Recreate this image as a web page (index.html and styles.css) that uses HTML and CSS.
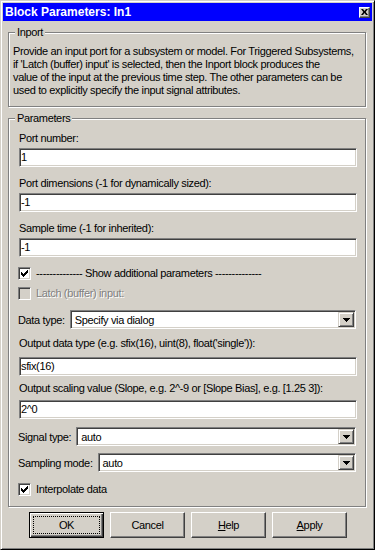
FILE: index.html
```html
<!DOCTYPE html>
<html lang="en">
<head>
    <meta charset="UTF-8">
    <meta name="viewport" content="width=device-width, initial-scale=1.0">
    <title>Block Parameters: In1</title>
    <link rel="stylesheet" href="styles.css">
</head>
<body>

    <div class="window">

        <!-- Title bar -->
        <div class="titlebar">
            <span class="title">Block Parameters: In1</span>
            <div class="close-btn">
                <svg width="7" height="6" viewBox="0 0 7 6"><path d="M0 0h2l1.5 2 1.5-2h2l-2.3 3 2.3 3h-2l-1.5-2-1.5 2h-2l2.3-3z" fill="#000"/></svg>
            </div>
        </div>

        <!-- Inport description -->
        <div class="group group-inport">
            <span class="group-title">Inport</span>
            <p class="desc">Provide an input port for a subsystem or model. For Triggered Subsystems,<br>if 'Latch (buffer) input' is selected, then the Inport block produces the<br>value of the input at the previous time step. The other parameters can be<br>used to explicitly specify the input signal attributes.</p>
        </div>

        <!-- Parameters -->
        <div class="group group-params">
            <span class="group-title">Parameters</span>

            <div class="label">Port number:</div>
            <div class="edit">1</div>

            <div class="label">Port dimensions (-1 for dynamically sized):</div>
            <div class="edit">-1</div>

            <div class="label">Sample time (-1 for inherited):</div>
            <div class="edit">-1</div>

            <div class="check-row">
                <span class="checkbox"><svg width="7" height="7" viewBox="0 0 7 7"><path d="M0 2h1v3H0zM1 3h1v3H1zM2 4h1v3H2zM3 3h1v3H3zM4 2h1v3H4zM5 1h1v3H5zM6 0h1v3H6z" fill="#000"/></svg></span>
                <span>-------------- Show additional parameters --------------</span>
            </div>

            <div class="check-row check-latch">
                <span class="checkbox disabled"></span>
                <span class="disabled-text">Latch (buffer) input:</span>
            </div>

            <div class="combo-row row-datatype">
                <span>Data type:</span>
                <div class="combo">
                    <span class="combo-text">Specify via dialog</span>
                    <span class="combo-btn"><svg width="7" height="4" viewBox="0 0 7 4"><path d="M0 0h7v1H0zM1 1h5v1H1zM2 2h3v1H2zM3 3h1v1H3z" fill="#000"/></svg></span>
                </div>
            </div>

            <div class="label label-tight">Output data type (e.g. sfix(16), uint(8), float('single')):</div>
            <div class="edit edit-tight">sfix(16)</div>

            <div class="label label-tighter">Output scaling value (Slope, e.g. 2^-9 or [Slope Bias], e.g. [1.25 3]):</div>
            <div class="edit edit-tighter">2^0</div>

            <div class="combo-row row-signal">
                <span>Signal type:</span>
                <div class="combo">
                    <span class="combo-text">auto</span>
                    <span class="combo-btn"><svg width="7" height="4" viewBox="0 0 7 4"><path d="M0 0h7v1H0zM1 1h5v1H1zM2 2h3v1H2zM3 3h1v1H3z" fill="#000"/></svg></span>
                </div>
            </div>

            <div class="combo-row row-sampling">
                <span>Sampling mode:</span>
                <div class="combo">
                    <span class="combo-text">auto</span>
                    <span class="combo-btn"><svg width="7" height="4" viewBox="0 0 7 4"><path d="M0 0h7v1H0zM1 1h5v1H1zM2 2h3v1H2zM3 3h1v1H3z" fill="#000"/></svg></span>
                </div>
            </div>

            <div class="check-row check-interp">
                <span class="checkbox"><svg width="7" height="7" viewBox="0 0 7 7"><path d="M0 2h1v3H0zM1 3h1v3H1zM2 4h1v3H2zM3 3h1v3H3zM4 2h1v3H4zM5 1h1v3H5zM6 0h1v3H6z" fill="#000"/></svg></span>
                <span>Interpolate data</span>
            </div>
        </div>

        <!-- Dialog buttons -->
        <div class="buttons">
            <div class="btn btn-default"><span class="focus-rect">OK</span></div>
            <div class="btn">Cancel</div>
            <div class="btn"><span><u>H</u>elp</span></div>
            <div class="btn"><span><u>A</u>pply</span></div>
        </div>

    </div>

</body>
</html>
```

FILE: styles.css
```css
/* General */
body {
    margin: 0;
    font-family: "Liberation Sans", Arial, sans-serif;
    font-size: 11px;
    letter-spacing: -0.35px;
    color: #000;
    background-color: #d4d0c8;
}

/* Window frame */
.window {
    width: 375px;
    height: 550px;
    box-sizing: border-box;
    padding: 2px;
    background-color: #d4d0c8;
    border: 1px solid;
    border-color: #d4d0c8 #000 #000 #d4d0c8;
    box-shadow: inset 1px 1px #fff, inset -1px -1px #808080;
}

.titlebar {
    height: 18px;
    display: flex;
    align-items: center;
    justify-content: space-between;
    padding: 0 2px;
    background-color: #0000ff;
    color: #fff;
}

.titlebar .title {
    font-size: 12px;
    font-weight: bold;
    letter-spacing: 0;
}

.close-btn {
    width: 11px;
    height: 11px;
    box-sizing: border-box;
    display: flex;
    align-items: center;
    justify-content: center;
    background-color: #d4d0c8;
    border: 1px solid;
    border-color: #fff #404040 #404040 #fff;
    box-shadow: inset -1px -1px #808080;
}

/* Group boxes */
.group {
    position: relative;
    margin: 11px 6px 0 5px;
    border: 1px solid #808080;
    box-shadow: inset 1px 1px #fff, 1px 1px #fff;
}

.group-title {
    position: absolute;
    top: -8px;
    left: 6px;
    padding: 0 2px;
    line-height: 14px;
    background-color: #d4d0c8;
}

.group-inport {
    padding: 12px 4px 9px 4px;
}

.desc {
    margin: 0;
    line-height: 13px;
    white-space: nowrap;
}

.group-params {
    padding: 3px 8px 10px 10px;
}

/* Labels and edit boxes */
.label {
    line-height: 14px;
    margin-top: 9px;
    white-space: nowrap;
}

.label-tight {
    margin-top: 7px;
}

.label-tighter {
    margin-top: 5px;
}

.edit,
.combo {
    height: 19px;
    box-sizing: border-box;
    background-color: #fff;
    border: 1px solid;
    border-color: #808080 #fff #fff #808080;
    box-shadow: inset 1px 1px #404040, inset -1px -1px #d4d0c8;
}

.edit {
    margin-top: 3px;
    padding-left: 1px;
    line-height: 17px;
}

.edit-tight {
    margin-top: 7px;
}

.edit-tighter {
    margin-top: 5px;
}

/* Check boxes */
.check-row {
    display: flex;
    align-items: center;
    gap: 5px;
    margin: 9px 0 0 -1px;
    line-height: 14px;
}

.check-latch {
    margin-top: 6px;
}

.check-interp {
    margin-top: 10px;
}

.checkbox {
    width: 13px;
    height: 13px;
    box-sizing: border-box;
    display: flex;
    align-items: center;
    justify-content: center;
    background-color: #fff;
    border: 1px solid;
    border-color: #808080 #fff #fff #808080;
    box-shadow: inset 1px 1px #404040, inset -1px -1px #d4d0c8;
}

.checkbox.disabled {
    background-color: #d4d0c8;
}

.disabled-text {
    color: #808080;
    text-shadow: 1px 1px #fff;
}

/* Drop-down lists */
.combo-row {
    display: flex;
    align-items: center;
    gap: 5px;
    margin: 10px 1px 0 -1px;
    white-space: nowrap;
}

.row-signal {
    margin-top: 8px;
}

.row-sampling {
    margin-top: 7px;
}

.combo {
    flex: 1;
    display: flex;
    align-items: center;
    padding: 1px;
}

.combo-text {
    flex: 1;
    padding-left: 3px;
}

.combo-btn {
    width: 16px;
    height: 15px;
    box-sizing: border-box;
    display: flex;
    align-items: center;
    justify-content: center;
    background-color: #d4d0c8;
    border: 1px solid;
    border-color: #d4d0c8 #404040 #404040 #d4d0c8;
    box-shadow: inset 1px 1px #fff, inset -1px -1px #808080;
}

/* Dialog buttons */
.buttons {
    display: flex;
    gap: 6px;
    margin-top: 5px;
    padding-left: 26px;
}

.btn {
    width: 75px;
    height: 26px;
    box-sizing: border-box;
    display: flex;
    align-items: center;
    justify-content: center;
    background-color: #d4d0c8;
    border: 1px solid;
    border-color: #fff #404040 #404040 #fff;
    box-shadow: inset -1px -1px #808080;
}

.btn-default {
    padding: 3px;
    border-color: #000;
    box-shadow: inset 1px 1px #fff, inset -1px -1px #404040, inset -2px -2px #808080;
}

.focus-rect {
    flex: 1;
    align-self: stretch;
    display: flex;
    align-items: center;
    justify-content: center;
    border: 1px dotted #000;
}
```
